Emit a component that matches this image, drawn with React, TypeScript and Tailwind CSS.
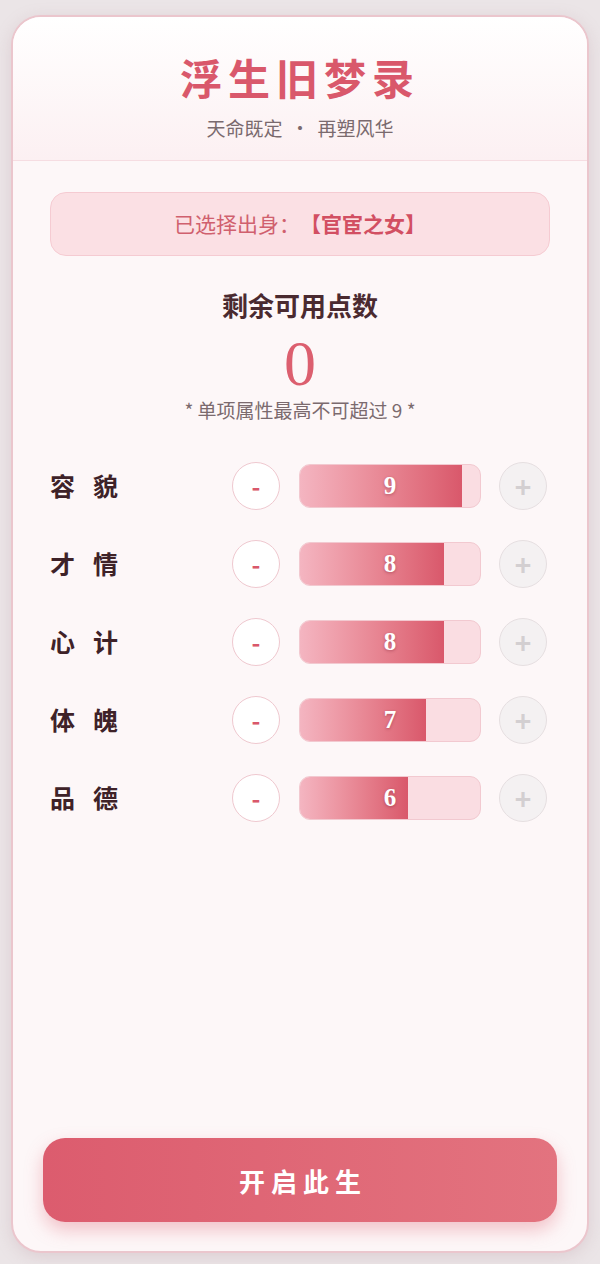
import React from 'react'

const STATS = [
  { name: ['容', '貌'], value: 9 },
  { name: ['才', '情'], value: 8 },
  { name: ['心', '计'], value: 8 },
  { name: ['体', '魄'], value: 7 },
  { name: ['品', '德'], value: 6 },
]

const serif = "font-['Liberation_Serif','Noto_Sans_CJK_SC',serif]"
const sans = "font-['Noto_Sans_CJK_SC','Noto_Sans',sans-serif]"

export default function App() {
  return (
    <div className={`min-h-screen bg-[#ebe5e7] px-[11px] pt-[15px] pb-[11px] ${sans}`}>
      <div className="h-[1238px] flex flex-col rounded-[30px] border-2 border-[#ebc6cd] bg-[#fdf7f8] overflow-hidden shadow-[0_4px_16px_rgba(180,140,150,0.25)]">
        {/* Header */}
        <div className="h-[144px] flex flex-col items-center bg-gradient-to-b from-[#ffffff] to-[#fcf0f2] border-b border-[#f6dde2] pt-[35px]">
          <h1 className={`text-[42px] leading-[58px] font-bold tracking-[6px] text-[#d9586b] ${serif}`}>浮生旧梦录</h1>
          <div className="mt-[5px] text-[19px] leading-[26px] text-[#7a6a6e] flex items-center">
            <span>天命既定</span>
            <span className="mx-[8px]">·</span>
            <span>再塑风华</span>
          </div>
        </div>

        <div className="px-[37px] pt-[31px] flex flex-col">
          {/* Origin */}
          <div className="h-[64px] rounded-[16px] bg-[#fbe0e4] border border-[#f5cbd2] flex items-center justify-center text-[21px] text-[#d0606e]">
            <span>已选择出身：</span>
            <span className="font-bold text-[#d24f62]">【官宦之女】</span>
          </div>

          {/* Points */}
          <div className="mt-[32px] flex flex-col items-center">
            <div className="text-[26px] leading-[34px] font-bold text-[#4a2a30]">剩余可用点数</div>
            <div className={`mt-[8px] text-[64px] leading-[68px] text-[#dc5f6f] ${serif}`}>0</div>
            <div className="text-[19px] leading-[24px] text-[#7b6a6e]">* 单项属性最高不可超过 9 *</div>
          </div>

          {/* Stats */}
          <div className="mt-[40px] flex flex-col gap-[30px]">
            {STATS.map(s => (
              <div key={s.name.join('')} className="h-[48px] flex items-center">
                <div className="w-[182px] flex gap-[18px] text-[25px] font-bold text-[#3e2228]">
                  <span>{s.name[0]}</span>
                  <span>{s.name[1]}</span>
                </div>
                <button className="w-[48px] h-[48px] rounded-full bg-white border border-[#efc8cf] flex items-center justify-center text-[24px] font-bold text-[#d9586b] leading-none">-</button>
                <div className="ml-[19px] w-[182px] h-[44px] rounded-[11px] bg-[#fadde2] border border-[#f2c9d0] relative overflow-hidden">
                  <div className="h-full bg-gradient-to-r from-[#f4b5c1] to-[#d9586b]" style={{ width: `${s.value * 10}%` }} />
                  <div className={`absolute inset-0 flex items-center justify-center text-[25px] font-bold text-white [text-shadow:0_1px_3px_rgba(120,30,50,0.45)] ${serif}`}>{s.value}</div>
                </div>
                <button className="ml-[18px] w-[48px] h-[48px] rounded-full bg-[#f4f1f2] border border-[#e6dfe1] flex items-center justify-center text-[28px] font-bold text-[#d3cfd1] leading-none">+</button>
              </div>
            ))}
          </div>
        </div>

        {/* Start */}
        <div className="mt-auto px-[30px] pb-[29px]">
          <button className="w-full h-[84px] rounded-[22px] bg-gradient-to-r from-[#dc5c6e] to-[#e3737f] shadow-[0_8px_18px_rgba(220,92,110,0.35)] text-white text-[26px] font-bold tracking-[6px] pl-[6px]">开启此生</button>
        </div>
      </div>
    </div>
  )
}
